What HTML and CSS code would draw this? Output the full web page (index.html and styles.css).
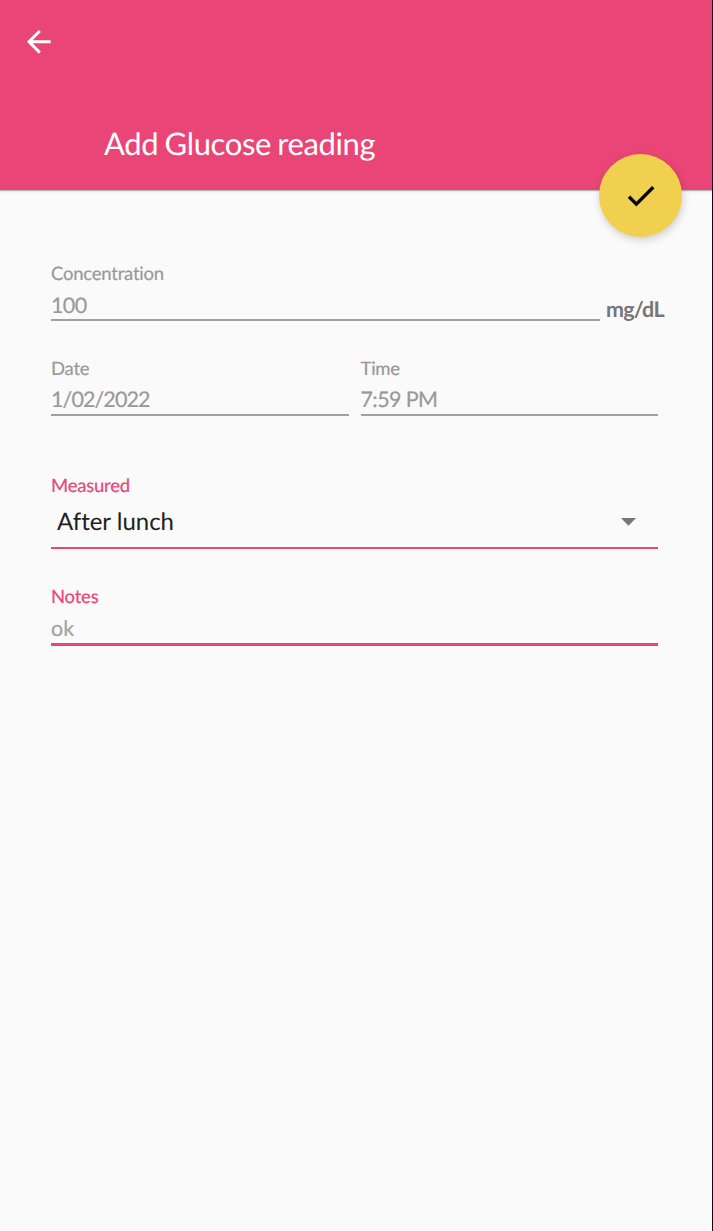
FILE: index.html
```html
<!DOCTYPE html>
<html lang="en">
<head>
<meta charset="utf-8">
<title>Add Glucose reading</title>
<link rel="stylesheet" href="styles.css">
</head>
<body>
<main class="screen">
  <header class="app-bar">
    <svg class="back" viewBox="0 0 24 24"><path d="M20 11H7.83l5.59-5.59L12 4l-8 8 8 8 1.41-1.41L7.83 13H20v-2z"/></svg>
    <h1 class="title">Add Glucose reading</h1>
    <div class="fab"><svg class="check" viewBox="0 0 24 24"><path d="M9 16.17L4.83 12l-1.42 1.41L9 19 21 7l-1.41-1.41z"/></svg></div>
  </header>
  <form class="form">
    <div class="row row-concentration">
      <div class="field"><label class="label">Concentration</label><div class="value">100</div></div>
      <span class="unit">mg/dL</span>
    </div>
    <div class="row row-datetime">
      <div class="field"><label class="label">Date</label><div class="value value-date">1/02/2022</div></div>
      <div class="field"><label class="label">Time</label><div class="value">7:59 PM</div></div>
    </div>
    <div class="field field-measured">
      <label class="label">Measured</label>
      <div class="select"><span>After lunch</span><svg class="caret" viewBox="0 0 15 8"><path d="M0 0h15L7.5 7.7z"/></svg></div>
    </div>
    <div class="field field-notes"><label class="label">Notes</label><div class="value">ok</div></div>
  </form>
</main>
</body>
</html>
```
FILE: styles.css
```css
* { box-sizing: border-box; }
body {
  margin: 0;
  background: #fafafa;
  font-family: Lato, "Liberation Sans", sans-serif;
  font-variant-ligatures: none;
  text-rendering: geometricPrecision;
}
.screen { width: 713px; height: 1231px; border-right: 1px solid #0b0a24; overflow: hidden; }
.app-bar {
  position: relative;
  height: 190px;
  padding: 24px 0 0 21px;
  background: #e94677;
  color: #fff;
  box-shadow: 0 1px 1px rgba(0, 0, 0, .24), 0 2px 3px rgba(0, 0, 0, .05);
}
.back { display: block; width: 35.6px; height: 35.6px; fill: #fff; }
.title { margin: 63.4px 0 0 83px; font-size: 31px; line-height: 40px; font-weight: 400; letter-spacing: -.38px; word-spacing: -1.2px; white-space: nowrap; }
.fab {
  position: absolute;
  right: 30px;
  top: 154px;
  width: 83px;
  height: 83px;
  border-radius: 50%;
  background: #f0d04e;
  box-shadow: 1px 3px 9px rgba(0, 0, 0, .18);
  display: flex;
  align-items: center;
  justify-content: center;
}
.check { width: 35.6px; height: 35.6px; fill: #000; stroke: #000; stroke-width: .3px; }
.form { padding: 72px 54px 0 51px; }
.row { display: flex; }
.row-concentration { gap: 6px; margin-right: -6px; }
.row-datetime { gap: 12px; margin-top: 35px; }
.field { flex: 1; min-width: 0; color: #999; }
.label { display: block; font-size: 18.5px; line-height: 22px; letter-spacing: -.22px; -webkit-text-stroke: .2px currentColor; }
.value {
  height: 37px;
  padding-top: 7px;
  font-size: 21.5px;
  line-height: 26px;
  letter-spacing: -.6px;
  border-bottom: 2px solid #a0a0a0;
  -webkit-text-stroke: .2px currentColor;
}
.value-date { letter-spacing: -.9px; }
.row-concentration .value { padding-top: 8px; }
.unit { width: 58px; margin-top: 34px; font-size: 21.5px; line-height: 26px; letter-spacing: -.75px; font-weight: 700; color: #767676; white-space: nowrap; }
.field-measured { margin-top: 58px; }
.field-measured .label, .field-notes .label { color: #e94677; }
.select {
  display: flex;
  align-items: center;
  justify-content: space-between;
  height: 53px;
  padding: 0 22px 1px 6px;
  border-bottom: 2px solid #e94677;
  font-size: 24px;
  color: #212121;
}
.caret { width: 15px; height: 8px; margin-top: 2px; fill: #757575; }
.field-notes { margin-top: 36px; }
.field-notes .value { height: 39px; padding-top: 8px; letter-spacing: 0; color: #a3a3a3; border-bottom: 3px solid #e94677; }
```
